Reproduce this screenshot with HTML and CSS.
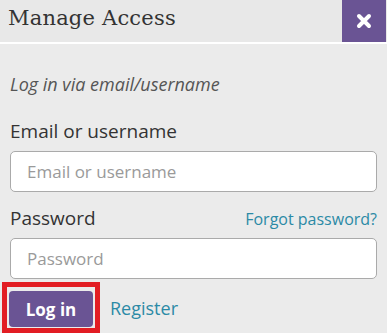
FILE: index.html
```html
<!DOCTYPE html>
<html>
<head>
<meta charset="utf-8">
<link rel="stylesheet" href="styles.css">
</head>
<body>
<div class="dialog">
  <div class="header">
    <h1 class="title">Manage Access</h1>
    <button class="close" aria-label="Close">
      <svg width="16" height="16" viewBox="0 0 16 16"><path d="M3 3 L13 13 M13 3 L3 13" stroke="#fff" stroke-width="4" stroke-linecap="round"/></svg>
    </button>
  </div>
  <div class="content">
    <p class="via">Log in via email/username</p>
    <label class="label" for="email">Email or username</label>
    <input class="field" id="email" type="text" placeholder="Email or username">
    <div class="pw-row">
      <label class="label" for="pw">Password</label>
      <a class="link forgot" href="#">Forgot password?</a>
    </div>
    <input class="field" id="pw" type="password" placeholder="Password">
    <div class="actions">
      <span class="highlight"><button class="login">Log in</button></span>
      <a class="link register" href="#">Register</a>
    </div>
  </div>
</div>
</body>
</html>
```

FILE: styles.css
```css
html, body {
  margin: 0;
  padding: 0;
  background: #ebebeb;
  overflow: hidden;
}
.dialog {
  width: 387px;
  height: 333px;
  font-family: "Open Sans", "Liberation Sans", sans-serif;
  color: #333;
}
.header {
  display: flex;
  justify-content: space-between;
  align-items: stretch;
  height: 42px;
  background: #e8e8e8;
  border-bottom: 2px solid #fff;
}
.title {
  margin: 0;
  padding-left: 8px;
  font-family: "DejaVu Serif", serif;
  font-weight: normal;
  font-size: 21px;
  line-height: 37px;
  color: #333;
  letter-spacing: 0.2px;
}
.close {
  width: 44px;
  margin-right: 1px;
  border: none;
  padding: 0;
  background: #6a5494;
  display: flex;
  align-items: center;
  justify-content: center;
}
.content {
  padding: 0 10px;
}
.via {
  margin: 29px 0 0;
  font-style: italic;
  font-size: 18px;
  line-height: 22px;
  color: #555;
}
.label {
  display: block;
  margin-top: 24px;
  font-size: 19px;
  line-height: 24px;
  color: #333;
}
.field {
  display: block;
  box-sizing: border-box;
  width: 367px;
  height: 41px;
  margin-top: 8px;
  padding: 0 16px;
  border: 1px solid #aaa;
  border-radius: 5px;
  background: #fff;
  font-family: "Open Sans", "Liberation Sans", sans-serif;
  font-size: 17px;
  color: #333;
}
.field::placeholder {
  color: #9a9a9a;
}
.pw-row {
  display: flex;
  justify-content: space-between;
  align-items: baseline;
  margin-top: 14px;
}
.pw-row .label {
  margin-top: 0;
}
.link {
  color: #2b8aa6;
  text-decoration: none;
}
.forgot {
  font-size: 16px;
}
.actions {
  display: flex;
  align-items: center;
  margin: 3px 0 0 -8px;
}
.highlight {
  display: inline-block;
  border: 5px solid #e21d23;
  padding: 4px 2px 1px 2px;
  line-height: 0;
}
.login {
  width: 84px;
  height: 36px;
  border: none;
  border-radius: 4px;
  background: #6a5494;
  color: #fff;
  font-family: "Open Sans", "Liberation Sans", sans-serif;
  font-weight: bold;
  font-size: 17px;
  padding: 0;
}
.register {
  margin-left: 10px;
  font-size: 18px;
  line-height: 24px;
}
```
